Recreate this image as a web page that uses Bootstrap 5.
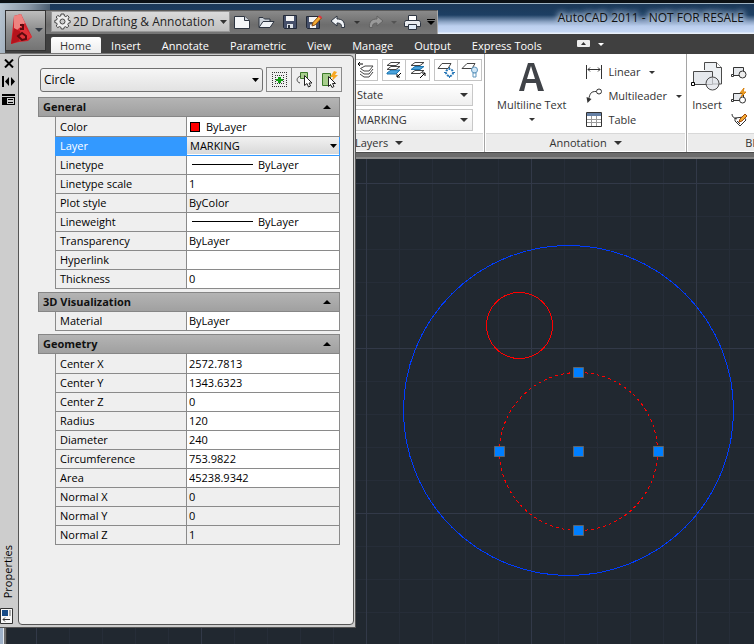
<!DOCTYPE html>
<html lang="en">
<head>
<meta charset="utf-8">
<meta name="viewport" content="width=device-width, initial-scale=1">
<title>AutoCAD 2011</title>
<link href="https://cdn.jsdelivr.net/npm/bootstrap@5.3.0/dist/css/bootstrap.min.css" rel="stylesheet">
<style>
:root{--ui:"Open Sans","Noto Sans",sans-serif}
body{font:11px/18px var(--ui);color:#333;background:#212830;overflow:hidden}
button,select,input{font:inherit;color:inherit}
button{border:0;background:none;padding:0}
svg{display:block;flex:none}
.titlebar{height:34px;background:linear-gradient(#0b1014 0 3px,#9fb4c4 3px 4px,#1b3858 4px,#1d3f63 15px,#8fa6c6 22px,#bccfee 26px,#c6d8f4 32px,#e9f0fa 33px);padding:10px 0 0 45px}
.titlebar::before{content:"";position:absolute;left:0;top:4px;width:50px;height:49px;background:linear-gradient(100deg,#b9c6d2,#8897a6 50%,#33485e)}
.qat{position:relative;height:24px;background:linear-gradient(#8a8a8a,#6d6d6d 60%,#777);border-top:1px solid #5a5a5a;border-right:1px solid #aaa;padding-left:6px}
.qat button{width:24px;height:22px;display:grid;place-items:center}
.qat .caret-btn{width:13px}
.workspace{position:relative;width:179px;height:21px}
.workspace svg{position:absolute;left:3px;top:2px}
.workspace select{appearance:none;width:100%;height:21px;border:1px solid #999;border-radius:0;padding:0 14px 0 21px;font-size:12px;line-height:19px;color:#222;background:url("data:image/svg+xml,%3Csvg xmlns='http://www.w3.org/2000/svg' width='7' height='4'%3E%3Cpath d='M0 0h7L3.5 4z' fill='%23333'/%3E%3C/svg%3E") right 2px center no-repeat,linear-gradient(#dadada,#c0c0c0)}
.app-title{font-size:12px;color:#111;white-space:nowrap;padding:0 10px 8px 0;margin-top:-1px;text-shadow:0 0 5px #b9cbe2,0 0 6px #b9cbe2,0 0 7px #b9cbe2,0 0 9px #b9cbe2}
.app-btn{position:absolute;left:5px;top:10px;width:41px;height:41px;border:1px solid #333;background:linear-gradient(#bdbdbd,#8d8d8d 50%,#747474);z-index:3}
.tabs{position:relative;height:20px;background:#404040;margin-left:5px;padding-left:46px;z-index:2}
.tabs a{color:#fff;text-decoration:none;padding:0 11px 0 10px;line-height:17px;height:17px;font-weight:500;white-space:nowrap}
.tabs a.on{background:linear-gradient(#fff,#ebebeb);color:#333;border-radius:2px 2px 0 0;padding:0 10px 0 9px}
.ribbon{background:#fff;height:98px;padding-left:350px;overflow:hidden}
.rpanel{border-right:1px solid #a5a5a5;flex:none}
.rpanel .foot{height:18px;background:#ececec;border-top:1px solid #d8d8d8;margin:0 1px 1px;line-height:18px}
.rlayers{width:135px}.rannot{width:202px}.rblock{width:160px}
.rlayers .foot{padding-left:4px}
.rbody{padding-top:6px}
.stack{padding-top:5px;display:grid;gap:3px;align-content:start}
.icons{margin-left:4px}
.ic{width:24px;height:22px;border:1px solid #c4c4c4;display:grid;place-items:center}
.ic+.ic{border-left:0}
.rsel{appearance:none;width:123px;height:22px;border:1px solid #c8c8c8;border-radius:0;padding:0 14px 0 6px;display:block;background:url("data:image/svg+xml,%3Csvg xmlns='http://www.w3.org/2000/svg' width='8' height='4'%3E%3Cpath d='M0 0h8L4 4z' fill='%23333'/%3E%3C/svg%3E") right 4px center no-repeat,linear-gradient(#fff,#efefef)}
.car{display:inline-block;border:solid transparent;border-width:3px 3px 0;border-top-color:currentColor}
.car.big{border-width:4px 4px 0;vertical-align:2px}
.line-btn{height:24px;gap:5px}
.edge{height:7px;background:linear-gradient(#4b4b4b 0 1px,#6c6c6c 1px 5px,#8a8a8a 5px)}
.model{min-height:200px}
.model>svg{position:absolute;inset:0;width:100%;height:100%}
.model::after{content:"";position:absolute;left:0;top:0;bottom:0;width:7px;background:linear-gradient(90deg,#9fb1c8 0 3px,#e3e8ee 3px 4px,#6d6d6d 4px 6px,#333 6px)}
.palette{position:absolute;left:0;top:53px;bottom:16px;width:356px;background:#cdcdcd;border:1px solid #555;border-left:0;border-top-color:#777;color:#000;z-index:4}
.rail{width:17px;padding-bottom:2px}
.rail button{height:18px;width:17px;display:grid;place-items:center}
.rail .name{writing-mode:vertical-rl;transform:rotate(180deg);line-height:16px;width:16px;margin-bottom:10px}
.sheet{background:#efefef;border:1px solid #555;border-radius:4px;margin:1px 1px 2px;padding:11px 11px 0 19px}
.picker{padding:0 0 5px 2px;gap:3px}
.psel{appearance:none;width:223px;height:24px;border:1px solid #707070;border-radius:3px;padding:0 16px 0 3px;font-size:12px;background:url("data:image/svg+xml,%3Csvg xmlns='http://www.w3.org/2000/svg' width='7' height='4'%3E%3Cpath d='M0 0h7L3.5 4z'/%3E%3C/svg%3E") right 3px center no-repeat,linear-gradient(#f6f6f6,#e2e2e2)}
.tool{width:26px;height:25px;border:1px solid #8a8a8a;display:grid;place-items:center}
.tool+.tool{margin-left:-1px}
.sec{width:302px;height:20px;border:1px solid #868686;background:linear-gradient(#b4b4b4,#a0a0a0);font-weight:700;padding:0 8px 0 4px;line-height:18px;color:#111}
.props{width:285px;margin:0 0 3px 17px;table-layout:fixed;border-collapse:collapse}
.props tr{height:19px}
.props th,.props td{border:1px solid #8a8a8a;padding:0 2px;line-height:17px;height:19px;white-space:nowrap}
.props tr:first-child>*{border-top:0}
.props th{width:131px;font-weight:400;padding-left:4px;background:#efefef}
.props td{background:#fff}
.props .ro td{background:#efefef}
.props input{width:100%;height:17px;border:0;padding:0;background:transparent;display:block;outline:0}
.props .picked th{background:#3399ff;color:#fff;border-color:#3399ff}
.props .picked td{padding:0;border-color:#3399ff}
.props select{appearance:none;width:100%;height:17px;border:0;border-radius:0;padding:0 12px 0 3px;display:block;background:url("data:image/svg+xml,%3Csvg xmlns='http://www.w3.org/2000/svg' width='7' height='4'%3E%3Cpath d='M0 0h7L3.5 4z'/%3E%3C/svg%3E") right 2px center no-repeat,linear-gradient(#f1f1f1,#d9d9d9)}
.swatch{display:inline-block;width:10px;height:10px;background:#f00;border:1px solid #000;margin:0 6px 0 1px;vertical-align:-1px}
.rule{display:inline-block;width:61px;height:1px;background:#000;margin:0 5px 0 3px;vertical-align:4px}
</style>
</head>
<body>
<div class="position-relative d-flex flex-column vh-100">
<header>
  <div class="titlebar d-flex justify-content-between">
    <div class="qat d-flex">
      <div class="workspace">
        <select aria-label="Workspace"><option>2D Drafting &amp; Annotation</option></select>
        <svg width="17" height="17" viewBox="0 0 17 17" fill="#eee" stroke="#444"><path d="M7 1h3l.4 2 1.400.6L13.600 2.500l1.500 1.700L14 6l.5 1.300 1.700.4v2l-1.800.5-.6 1.300 1 1.600-1.700 1.600-1.600-1-1.400.6L9.700 16H7.300l-.5-1.800-1.400-.6-1.600 1-1.600-1.600 1-1.700L2.600 10 .8 9.600V7.400L2.600 7l.6-1.400-1-1.600L3.800 2.400l1.600 1L6.700 3z"/><circle cx="8.500" cy="8.500" r="2.500" fill="#ccc"/></svg>
      </div>
      <button aria-label="New"><svg width="16" height="14" viewBox="0 0 16 14"><path d="M.5 1.500h10l5 4v8H.5z" fill="#f4f6f8" stroke="#2d3440"/><path d="M10.500 1.500v4h5" fill="#cdd3da" stroke="#2d3440"/></svg></button>
      <button aria-label="Open"><svg width="17" height="14" viewBox="0 0 17 14" stroke="#2d3440"><path d="M1 12V2.500h4l1.500 1.500H12v3" fill="#cbd1d8"/><path d="M1 12.500 5 6.500h11l-4 6z" fill="#eef1f4"/></svg></button>
      <button aria-label="Save"><svg width="14" height="14" viewBox="0 0 14 14"><path d="M.5.5h13v13h-12l-1-1z" fill="#46506a" stroke="#232a38"/><path d="M3 1h8v5H3z" fill="#f5f5f5"/><path d="M4 9h6v4H4z" fill="#dfe3e8"/><path d="M5 10h2v3H5z" fill="#2d3440"/></svg></button>
      <button aria-label="Save As"><svg width="17" height="15" viewBox="0 0 17 15"><path d="M.5 1.500h13v12h-12l-1-1z" fill="#46506a" stroke="#232a38"/><path d="M3 2h8v5H3zM4 9.500h6v3.500H4z" fill="#f5f5f5"/><path d="m6 11 1-3.500 6-6.500 2.500 2-6.200 6.800z" fill="#f4ad35" stroke="#8a4b12"/><path d="m13 1 2.500 2" stroke="#d34" stroke-width="2"/></svg></button>
      <button aria-label="Undo"><svg width="17" height="14" viewBox="0 0 17 14"><path d="M7 1v3c5 0 8 2 7.500 8.500h-3C12 9.500 10.500 8 7 8v3L1 6z" fill="#f0f3f7" stroke="#2d3440"/></svg></button>
      <button class="caret-btn" aria-label="Undo list"><span class="car"></span></button>
      <button aria-label="Redo"><svg width="17" height="14" viewBox="0 0 17 14"><path d="M10 1v3c-5 0-8 2-7.500 8.500h3C5 9.500 6.500 8 10 8v3l6-5z" fill="#9a9a9a" stroke="#626262"/></svg></button>
      <button class="caret-btn" aria-label="Redo list"><span class="car opacity-50"></span></button>
      <button aria-label="Plot"><svg width="17" height="15" viewBox="0 0 17 15" stroke="#2d3440"><path d="M4.500.5h8v5h-8z" fill="#fff"/><path d="M1.500 5.500h14l1 2v4h-16v-4z" fill="#e7eaee"/><path d="M4.500 9.500h8v5h-8z" fill="#dfeaf6"/></svg></button>
      <button class="caret-btn" aria-label="Customize toolbar"><svg width="8" height="7"><path d="M0 0h8v1H0zM0 2h8L4 6z" fill="#000"/></svg></button>
    </div>
    <div class="app-title">AutoCAD 2011 - NOT FOR RESALE</div>
  </div>
  <button class="app-btn" aria-label="Application menu"><svg width="39" height="39" viewBox="0 0 39 39"><path d="m8 5 7-2 11 23-4 4-9 1-8 2z" fill="#d3202a"/><path d="m8 5 7-2 4 9-8 7-3-1z" fill="#ee8380"/><path d="M8 17 5 33l8-3 2-9z" fill="#b5131c"/><path d="m16 12 10 14-8 3-5-1z" fill="#e23138"/><path d="M14 14h3v4h-3M12 25l4-3 4 3v3l-4 1z" fill="none" stroke="#5c0a0e" stroke-width="2"/><path d="M29 17h8l-4 4z" fill="#333a44"/></svg></button>
  <nav class="tabs d-flex align-items-end" aria-label="Ribbon tabs">
    <a class="on" href="#">Home</a><a href="#">Insert</a><a href="#">Annotate</a><a href="#">Parametric</a><a href="#">View</a><a href="#">Manage</a><a href="#">Output</a><a href="#">Express Tools</a>
    <button class="align-self-center ms-4 me-2 d-flex align-items-center gap-2" aria-label="Minimize ribbon"><svg width="13" height="8"><rect width="13" height="7" rx="1" fill="#eee"/><path d="M4 5h5L6.500 2z" fill="#333"/></svg><span class="car text-white"></span></button>
  </nav>
</header>
<div class="ribbon d-flex">
  <section class="rpanel rlayers d-flex flex-column">
    <div class="stack flex-grow-1">
      <div class="icons d-flex gap-1">
        <div class="d-flex"><button class="ic" aria-label="Layer previous"><svg width="18" height="18" viewBox="0 0 18 18" fill="#fff" stroke="#444"><path d="m3 13 4 3h5l4-5M3 10l4 3h5l4-5M3.500 7.500 7 10h5l4-5H8z"/><path d="M1 3h5M3 1 1 3l2 2" stroke="#000"/></svg></button></div>
        <div class="d-flex"><button class="ic" aria-label="Make current"><svg width="18" height="18" viewBox="0 0 18 18" stroke="#444"><path d="m2 12 4-3h9l-4 4H2z" fill="#4aa3dc" stroke="#1b75b0"/><path d="m2 8.500 4-3h9l-4 3zM2 4.500l4-3h9l-4 3z" fill="#fff"/><path d="m16 12-4 4m0-3v3h3" fill="none" stroke="#000"/></svg></button><button class="ic" aria-label="Match layer"><svg width="18" height="18" viewBox="0 0 18 18" stroke="#444"><path d="m2 4.500 4-3h9l-4 3zM2 12.500l4-3h9l-4 3z" fill="#fff"/><path d="m2 8.500 4-3h9l-4 3z" fill="#4aa3dc" stroke="#1b75b0"/><path d="m11 17 5-5m-3 0h3v3" fill="none" stroke="#000"/></svg></button></div>
        <div class="d-flex"><button class="ic" aria-label="Freeze layer"><svg width="19" height="18" viewBox="0 0 19 18"><path d="m1 7.500 4-5h9l-3 5z" fill="#fff" stroke="#444"/><circle cx="12.500" cy="11.500" r="3.500" fill="#fff" stroke="#2677b8" stroke-width="2" stroke-dasharray="2 1"/><path d="M12.500 6v11M7 11.500h11" stroke="#2677b8" stroke-dasharray="2 7"/></svg></button><button class="ic" aria-label="Layer off"><svg width="18" height="18" viewBox="0 0 18 18"><path d="m1 7.500 5-5h8l-3 5z" fill="#fff" stroke="#444"/><circle cx="13.500" cy="9" r="3" fill="#cfe6f7" stroke="#5d95bd"/><path d="M12 12h3v4h-3z" fill="#fff" stroke="#5d95bd"/></svg></button></div>
      </div>
      <select class="rsel" aria-label="Layer state"><option>State</option></select>
      <select class="rsel" aria-label="Layer"><option>MARKING</option></select>
    </div>
    <div class="foot">Layers <span class="car big ms-1"></span></div>
  </section>
  <section class="rpanel rannot d-flex flex-column">
    <div class="rbody flex-grow-1 d-flex justify-content-between ps-2 ms-1">
      <button class="d-flex flex-column align-items-center"><svg width="27" height="32" viewBox="0 0 27 32"><path d="M1 31h5l2-8h10l2 8h6L16 3h-6zM9 19l4-13 4 13z" fill="#404348" fill-rule="evenodd"/></svg><span class="mt-1">Multiline Text</span><span class="car mt-1"></span></button>
      <div class="pe-1">
        <button class="line-btn d-flex align-items-center"><svg width="17" height="16" viewBox="0 0 17 16" fill="none" stroke="#333"><path d="M.5 1v14M15.500 1v14M2 5.500h12M4 3.500l-2 2 2 2M12 3.500l2 2-2 2"/></svg>Linear<span class="car ms-1"></span></button>
        <button class="line-btn d-flex align-items-center"><svg width="17" height="16" viewBox="0 0 17 16" fill="none" stroke="#333"><circle cx="13" cy="3.500" r="2.500"/><path d="M10 3.500C5 3.500 4 5 2.500 12"/><path d="m.5 9 1 6 4-4z" fill="#333" stroke="none"/></svg>Multileader<span class="car ms-1"></span></button>
        <button class="line-btn d-flex align-items-center"><svg width="17" height="16" viewBox="0 0 17 16"><path d="M.5.5h15v14H.5z" fill="#fff" stroke="#333"/><path d="M1 1h14v3H1z" fill="#6580a5"/><path d="M1 7.500h14M1 10.500h14M5.500 4v10M10.500 4v10" stroke="#999"/></svg>Table</button>
      </div>
    </div>
    <div class="foot text-center">Annotation <span class="car big ms-1"></span></div>
  </section>
  <section class="rpanel rblock d-flex flex-column">
    <div class="rbody flex-grow-1 d-flex">
      <button class="d-flex flex-column align-items-center ms-1 me-2"><svg width="32" height="32" viewBox="0 0 32 32" stroke="#4a4a4a"><path d="M13.500 10V2.500h12l5 5V24h-9" fill="#edf0f3"/><path d="M25.500 2.500v5h5" fill="#fff"/><path d="M2.500 11.500h19v13h-19z" fill="#e5e8ec"/><circle cx="21.500" cy="23.500" r="6.500" fill="#dfe3e8" fill-opacity=".7"/><path d="M.5 22.500h3v3h-3z" fill="#fff" stroke="#000"/></svg><span class="mt-1">Insert</span></button>
      <div>
        <button class="line-btn d-flex align-items-center" aria-label="Create"><svg width="16" height="14" viewBox="0 0 16 14" stroke="#333" fill="#fff"><path d="M2.500 2.500h10v8h-10z" fill="#e5e8ec"/><circle cx="11.500" cy="9.500" r="3.500" fill="#eee"/><path d="M.5 9.500h2v2h-2z"/></svg></button>
        <button class="line-btn d-flex align-items-center" aria-label="Edit"><svg width="16" height="16" viewBox="0 0 16 16" stroke="#333" fill="#fff"><path d="M2.500 5.500h10v7h-10z" fill="#e5e8ec"/><circle cx="11.500" cy="12" r="3"/><path d="M.5 11.500h2v2h-2z"/><path d="m13 0-4 5h3l-2 4 5-5h-3z" fill="#f9b233" stroke="#d98310"/></svg></button>
        <button class="line-btn d-flex align-items-center" aria-label="Edit attributes"><svg width="16" height="15" viewBox="0 0 16 15" stroke="#333" fill="#fff"><path d="m4 5 9-1 2 3-6 6-5-5z"/><path d="M1 1c0 3 2 4 5 5M6 8l3 3" fill="none"/><path d="m8 9 1-3 5-5 2 2-5 5z" fill="#f4ad35" stroke="#a1490c"/></svg></button>
      </div>
    </div>
    <div class="foot text-center">Block <span class="car big ms-1"></span></div>
  </section>
</div>
<div class="edge"></div>
<main class="model position-relative flex-grow-1">
  <svg role="img" aria-label="Drawing with three circles">
    <defs>
      <pattern id="minor" x="3" y="24" width="33" height="33" patternUnits="userSpaceOnUse"><path d="M.5 0v33M0 .5h33" stroke="#262d38"/></pattern>
      <pattern id="major" x="36" y="24" width="165" height="165" patternUnits="userSpaceOnUse"><path d="M.5 0v165M0 .5h165" stroke="#323948"/></pattern>
    </defs>
    <rect width="100%" height="100%" fill="#212830"/>
    <rect width="100%" height="100%" fill="url(#minor)"/>
    <rect width="100%" height="100%" fill="url(#major)"/>
    <g fill="none" shape-rendering="crispEdges">
      <circle cx="568.500" cy="251.500" r="165" stroke="#003cff"/>
      <circle cx="519.500" cy="166.500" r="33" stroke="#f00"/>
      <circle cx="578.500" cy="292.500" r="79" stroke="#f00" stroke-dasharray="3 3"/>
    </g>
    <g fill="#007fff" stroke="#5f6368">
      <path d="M573.500 208.500h10v10h-10zM494.500 287.500h10v10h-10zM573.500 287.500h10v10h-10zM653.500 287.500h10v10h-10zM573.500 366.500h10v10h-10z"/>
    </g>
  </svg>
</main>
<aside class="palette d-flex" aria-label="Properties palette">
  <div class="rail d-flex flex-column">
    <button aria-label="Close"><svg width="10" height="9" viewBox="0 0 10 9"><path d="m1 .5 8 8m0-8-8 8" stroke="#000" stroke-width="2"/></svg></button>
    <button aria-label="Auto-hide"><svg width="14" height="11" viewBox="0 0 14 11"><path d="M0 0h2v11H0zM7 1v9L3 5.500zM9 1v9l4-4.500z"/></svg></button>
    <button aria-label="Palette menu"><svg width="13" height="11" viewBox="0 0 13 11"><path d="M0 0h13v2H0zM0 3h13v8H0z"/><path d="M5 4h7v6H5z" fill="#ccc"/><path d="M6 5.500h5M6 8.500h5" stroke="#000"/></svg></button>
    <div class="name mt-auto">Properties</div>
    <svg width="14" height="17" viewBox="0 0 14 17"><path d="M.5.500h12v15H.5z" fill="#f8f8f8" stroke="#333"/><path d="M2 2h6v6H2z" fill="#174b86"/><path d="M9 2h2v6H9z" fill="#aaa"/><path d="M3 11.500h7M5 9.500l-2 2 2 2" stroke="#333" fill="none"/></svg>
  </div>
  <div class="sheet flex-grow-1">
    <div class="picker d-flex align-items-center">
      <select class="psel" aria-label="Object type"><option>Circle</option></select>
      <div class="d-flex">
      <button class="tool" aria-label="Toggle pickadd"><svg width="17" height="17" viewBox="0 0 17 17"><path d="M1 1.500h15M1 15.500h15M1.500 3v12M15.500 3v12M4 4.500h9M4 12.500h9M4.500 6v6M12.500 6v6" stroke="#333" stroke-dasharray="1 1"/><path d="M7 6h3v2h2v2h-2v2H7v-2H5V8h2z" fill="#14a014"/></svg></button>
      <button class="tool" aria-label="Select objects"><svg width="17" height="17" viewBox="0 0 17 17"><path d="M4.500 1.500h7v6h-7z" fill="#a8cf8d" stroke="#3c7a2a"/><path d="M5 5C0 6 0 11 4 12" fill="none" stroke="#444"/><path d="M8.500 4.500v10l2.500-2 1.500 3.500 2-1-1.500-3h3z" fill="#fff" stroke="#222"/></svg></button>
      <button class="tool" aria-label="Quick select"><svg width="17" height="17" viewBox="0 0 17 17"><path d="M1.500 2.500h8v12h-8z" fill="#a8cf8d" stroke="#3c7a2a"/><path d="m13 0-4 6h3l-1 4 6-6h-3l2-3z" fill="#f7a823"/><path d="M7.500 5.500v10l2-2 1.500 3 2-1-1.500-3h3z" fill="#fff" stroke="#222"/></svg></button>
      </div>
    </div>
    <button class="sec d-flex justify-content-between align-items-center" data-bs-toggle="collapse" data-bs-target="#general" aria-expanded="true">General<svg width="8" height="4"><path d="M0 4h8L4 0z"/></svg></button>
    <div id="general" class="collapse show"><table class="props">
      <tr><th scope="row">Color</th><td><span class="swatch"></span>ByLayer</td></tr>
      <tr class="picked"><th scope="row"><label for="lay">Layer</label></th><td><select id="lay"><option>MARKING</option></select></td></tr>
      <tr><th scope="row">Linetype</th><td><span class="rule"></span>ByLayer</td></tr>
      <tr><th scope="row"><label for="lts">Linetype scale</label></th><td><input id="lts" value="1"></td></tr>
      <tr class="ro"><th scope="row">Plot style</th><td>ByColor</td></tr>
      <tr><th scope="row">Lineweight</th><td><span class="rule"></span>ByLayer</td></tr>
      <tr><th scope="row"><label for="tra">Transparency</label></th><td><input id="tra" value="ByLayer"></td></tr>
      <tr><th scope="row"><label for="hyp">Hyperlink</label></th><td><input id="hyp"></td></tr>
      <tr><th scope="row"><label for="thi">Thickness</label></th><td><input id="thi" value="0"></td></tr>
    </table></div>
    <button class="sec d-flex justify-content-between align-items-center" data-bs-toggle="collapse" data-bs-target="#visual" aria-expanded="true">3D Visualization<svg width="8" height="4"><path d="M0 4h8L4 0z"/></svg></button>
    <div id="visual" class="collapse show"><table class="props">
      <tr><th scope="row">Material</th><td>ByLayer</td></tr>
    </table></div>
    <button class="sec d-flex justify-content-between align-items-center" data-bs-toggle="collapse" data-bs-target="#geometry" aria-expanded="true">Geometry<svg width="8" height="4"><path d="M0 4h8L4 0z"/></svg></button>
    <div id="geometry" class="collapse show"><table class="props">
      <tr><th scope="row"><label for="cx">Center X</label></th><td><input id="cx" value="2572.7813"></td></tr>
      <tr><th scope="row"><label for="cy">Center Y</label></th><td><input id="cy" value="1343.6323"></td></tr>
      <tr><th scope="row"><label for="cz">Center Z</label></th><td><input id="cz" value="0"></td></tr>
      <tr><th scope="row"><label for="rad">Radius</label></th><td><input id="rad" value="120"></td></tr>
      <tr><th scope="row"><label for="dia">Diameter</label></th><td><input id="dia" value="240"></td></tr>
      <tr><th scope="row"><label for="cir">Circumference</label></th><td><input id="cir" value="753.9822"></td></tr>
      <tr><th scope="row"><label for="are">Area</label></th><td><input id="are" value="45238.9342"></td></tr>
      <tr class="ro"><th scope="row">Normal X</th><td>0</td></tr>
      <tr class="ro"><th scope="row">Normal Y</th><td>0</td></tr>
      <tr class="ro"><th scope="row">Normal Z</th><td>1</td></tr>
    </table></div>
  </div>
</aside>
</div>
<script src="https://cdn.jsdelivr.net/npm/bootstrap@5.3.0/dist/js/bootstrap.bundle.min.js"></script>
</body>
</html>
